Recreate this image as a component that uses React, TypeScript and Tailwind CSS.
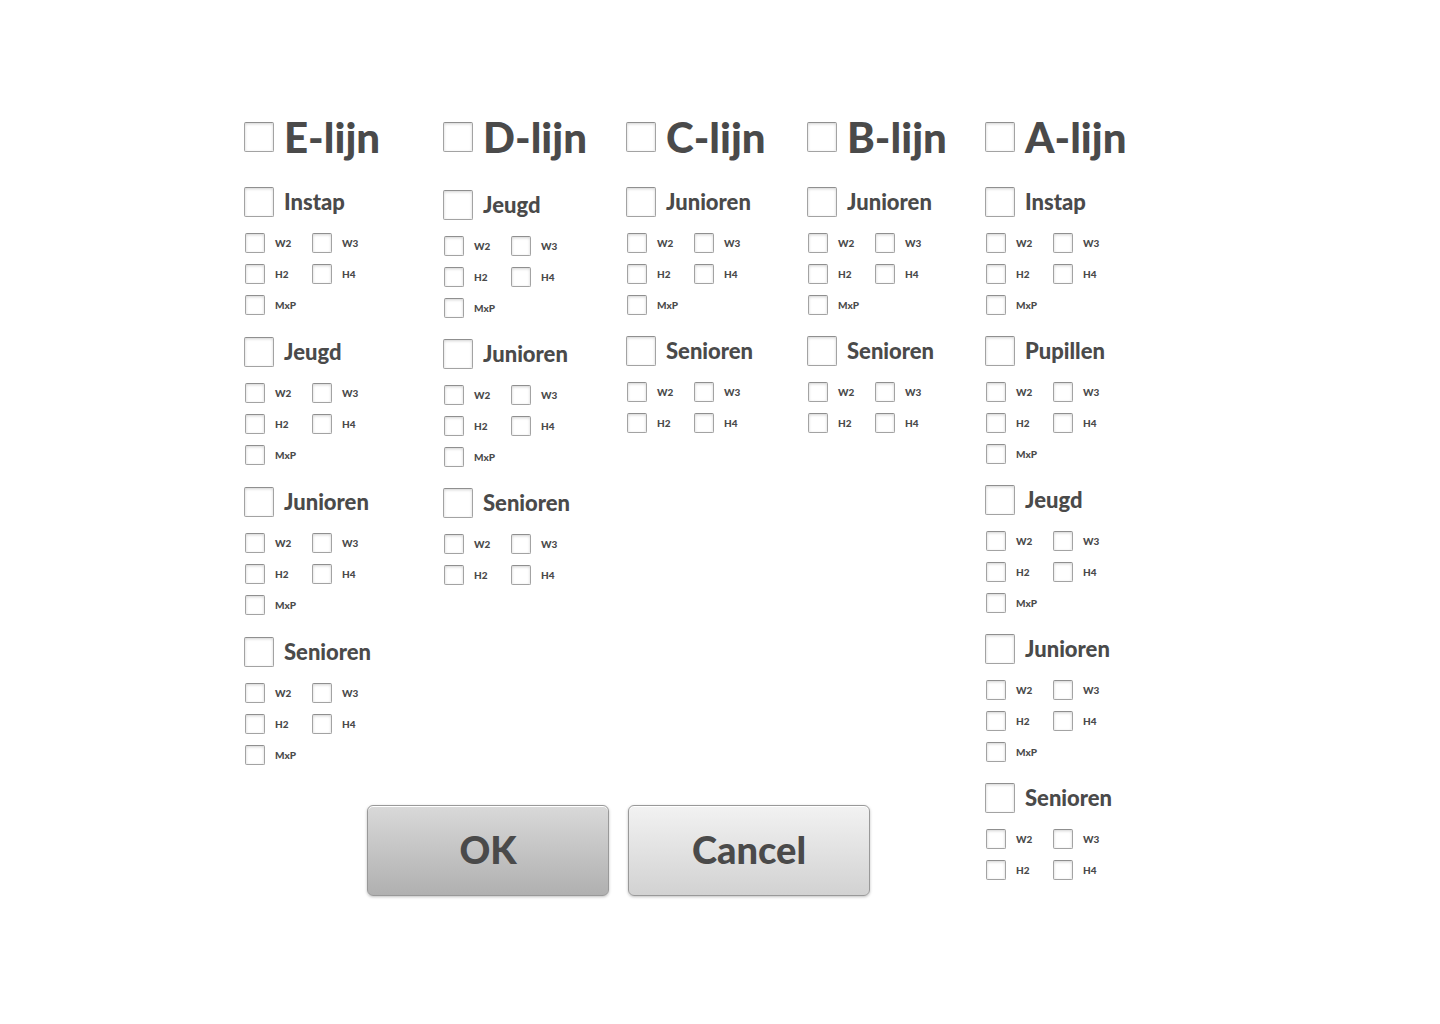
import React from "react";

type Group = { name: string; events: string[] };
type Line = { name: string; column: string; list: string; groups: Group[] };

const ALL = ["W2", "W3", "H2", "H4", "MxP"];
const NO_MIX = ["W2", "W3", "H2", "H4"];

const lines: Line[] = [
  {
    name: "E-lijn",
    column: "gap-[35px]",
    list: "gap-[22px]",
    groups: [
      { name: "Instap", events: ALL },
      { name: "Jeugd", events: ALL },
      { name: "Junioren", events: ALL },
      { name: "Senioren", events: ALL },
    ],
  },
  {
    name: "D-lijn",
    column: "gap-[38px]",
    list: "gap-[21px]",
    groups: [
      { name: "Jeugd", events: ALL },
      { name: "Junioren", events: ALL },
      { name: "Senioren", events: NO_MIX },
    ],
  },
  {
    name: "C-lijn",
    column: "gap-[35px]",
    list: "gap-[21px]",
    groups: [
      { name: "Junioren", events: ALL },
      { name: "Senioren", events: NO_MIX },
    ],
  },
  {
    name: "B-lijn",
    column: "gap-[35px]",
    list: "gap-[21px]",
    groups: [
      { name: "Junioren", events: ALL },
      { name: "Senioren", events: NO_MIX },
    ],
  },
  {
    name: "A-lijn",
    column: "gap-[35px] row-span-2",
    list: "gap-[21px]",
    groups: [
      { name: "Instap", events: ALL },
      { name: "Pupillen", events: ALL },
      { name: "Jeugd", events: ALL },
      { name: "Junioren", events: ALL },
      { name: "Senioren", events: NO_MIX },
    ],
  },
];

const box =
  "shrink-0 appearance-none rounded-[2px] border border-[#a3a3a3] border-t-[#8f8f8f] bg-white shadow-[inset_0_1px_3px_rgba(0,0,0,0.18)] checked:bg-[#8a8a8a]";

function LineColumn({ line }: { line: Line }) {
  return (
    <section className={`flex flex-col ${line.column}`}>
      <h2>
        <label className="flex h-[30px] items-center gap-[10px] text-[42px] leading-[30px] font-black">
          <input type="checkbox" className={`size-[30px] ${box}`} />
          {line.name}
        </label>
      </h2>
      <div className={`flex flex-col ${line.list}`}>
        {line.groups.map((group) => (
          <div key={group.name} className="flex flex-col gap-4">
            <label className="flex h-[30px] items-center gap-[10px] text-[22px] leading-[30px] font-black">
              <input type="checkbox" className={`size-[30px] ${box}`} />
              {group.name}
            </label>
            <div className="grid grid-cols-[67px_67px] gap-y-[11px] pl-px">
              {group.events.map((event) => (
                <label
                  key={event}
                  className="flex h-5 items-center gap-[10px] text-[10px] leading-5 font-black"
                >
                  <input type="checkbox" className={`size-5 ${box}`} />
                  {event}
                </label>
              ))}
            </div>
          </div>
        ))}
      </div>
    </section>
  );
}

const button =
  "h-[91px] w-[242px] rounded-[6px] border border-[#999] bg-linear-to-b pb-1 text-[38px] leading-[48px] font-black shadow-[inset_0_1px_0_#fff,0_1px_3px_rgba(0,0,0,0.25)]";

export default function App() {
  return (
    <main className="min-h-screen bg-white px-6 pt-[122px] pb-16 font-['Lato',sans-serif] text-[#4a4a4a]">
      <form
        className="mx-auto grid max-w-[952px] grid-cols-[199fr_183fr_181fr_178fr_211fr] gap-y-10"
        onSubmit={(e) => e.preventDefault()}
      >
        {lines.map((line) => (
          <LineColumn key={line.name} line={line} />
        ))}
        <div className="col-span-4 flex justify-center gap-[19px] pl-2">
          <button type="submit" className={`from-[#d9d9d9] to-[#b0b0b0] ${button}`}>
            OK
          </button>
          <button type="button" className={`from-[#f2f2f2] to-[#d2d2d2] ${button}`}>
            Cancel
          </button>
        </div>
      </form>
    </main>
  );
}
